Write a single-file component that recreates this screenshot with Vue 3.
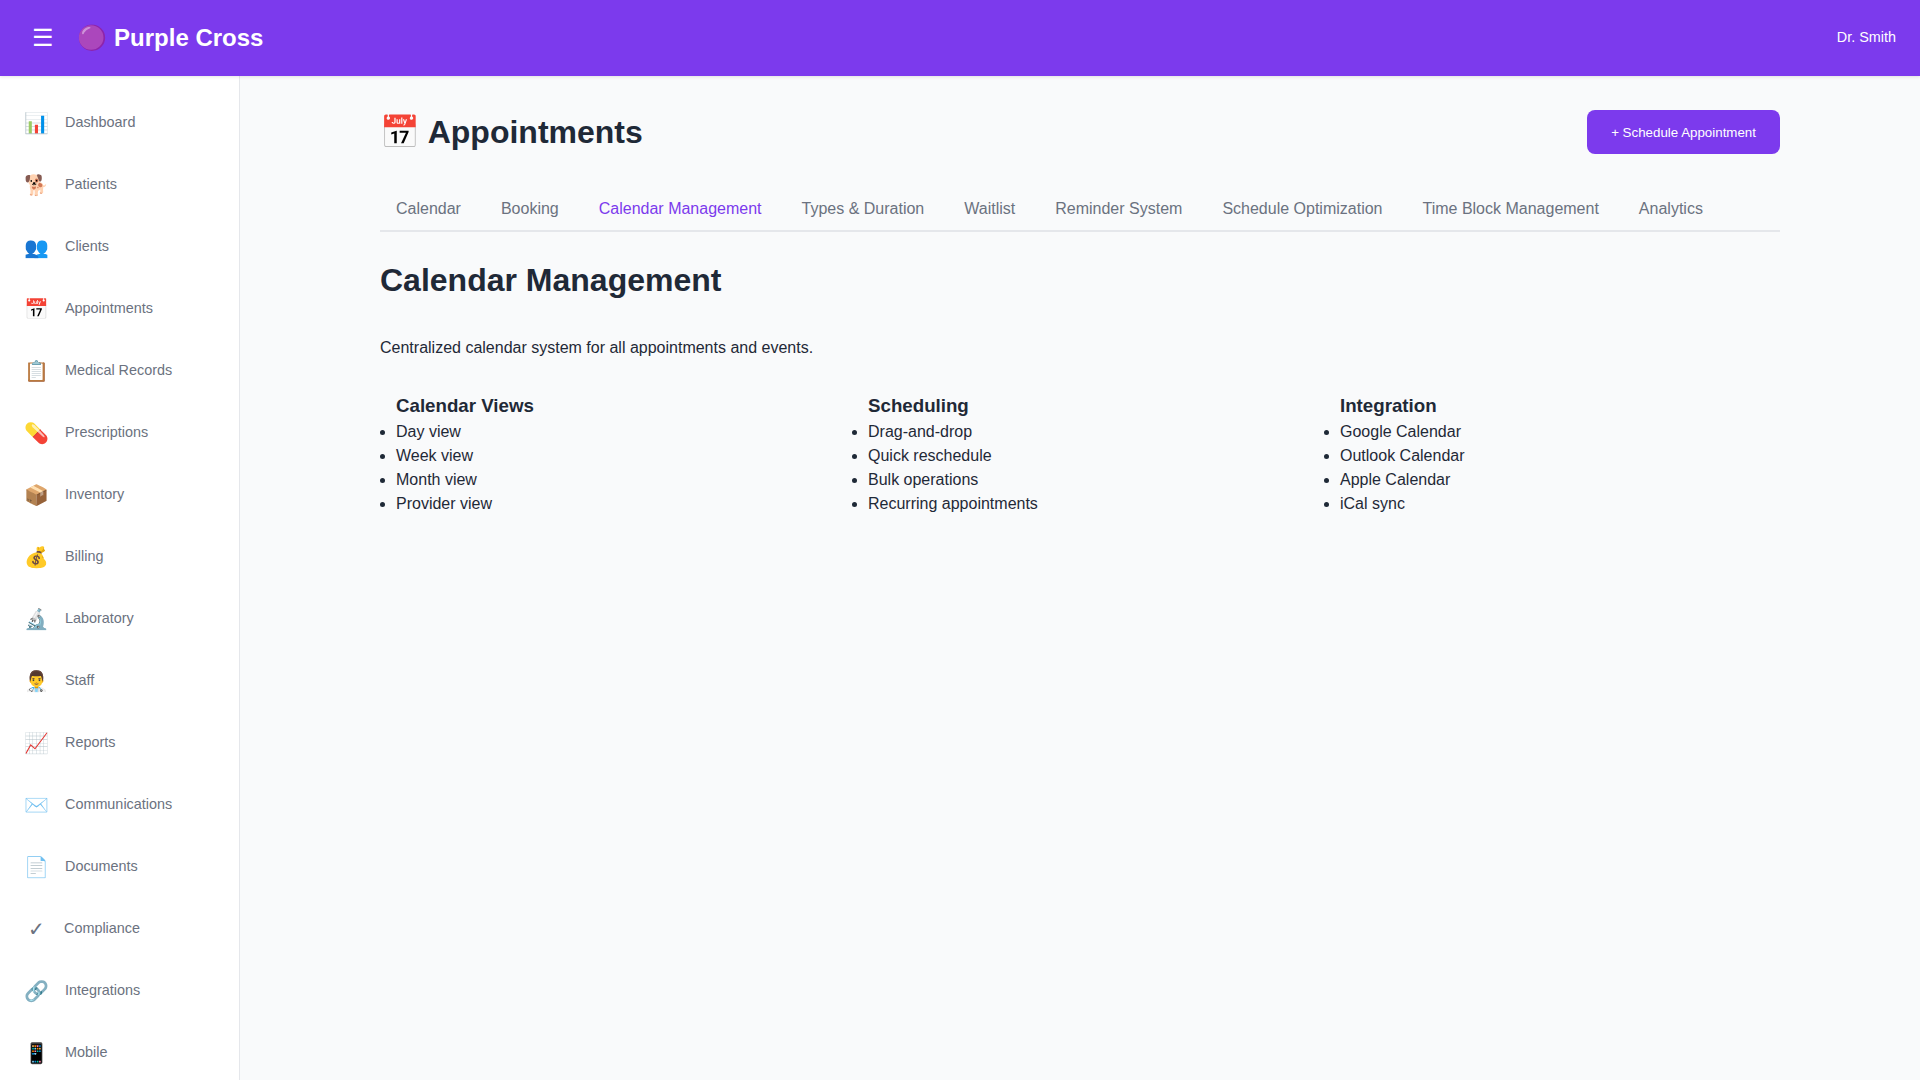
<script setup>
const nav = [
  ['📊', 'Dashboard'], ['🐕', 'Patients'], ['👥', 'Clients'], ['📅', 'Appointments'],
  ['📋', 'Medical Records'], ['💊', 'Prescriptions'], ['📦', 'Inventory'], ['💰', 'Billing'],
  ['🔬', 'Laboratory'], ['👨‍⚕️', 'Staff'], ['📈', 'Reports'], ['✉️', 'Communications'],
  ['📄', 'Documents'], ['✓', 'Compliance'], ['🔗', 'Integrations'], ['📱', 'Mobile'],
]
const tabs = ['Calendar', 'Booking', 'Calendar Management', 'Types & Duration', 'Waitlist',
  'Reminder System', 'Schedule Optimization', 'Time Block Management', 'Analytics']
const features = [
  { title: 'Calendar Views', items: ['Day view', 'Week view', 'Month view', 'Provider view'] },
  { title: 'Scheduling', items: ['Drag-and-drop', 'Quick reschedule', 'Bulk operations', 'Recurring appointments'] },
  { title: 'Integration', items: ['Google Calendar', 'Outlook Calendar', 'Apple Calendar', 'iCal sync'] },
]
</script>

<template>
  <div class="app">
    <header class="header">
      <div class="left">
        <button class="menu">☰</button>
        <h1 class="brand">🟣 Purple Cross</h1>
      </div>
      <span class="user">Dr. Smith</span>
    </header>
    <div class="body">
      <nav class="sidebar">
        <a v-for="[icon, label] in nav" :key="label" class="link">
          <span class="icon">{{ icon }}</span><span class="label">{{ label }}</span>
        </a>
      </nav>
      <main class="main">
        <div class="page">
          <div class="page-head">
            <h1>📅 Appointments</h1>
            <button class="primary">+ Schedule Appointment</button>
          </div>
          <div class="tabs">
            <button v-for="t in tabs" :key="t" class="tab" :class="{ active: t === 'Calendar Management' }">{{ t }}</button>
          </div>
          <h2>Calendar Management</h2>
          <p>Centralized calendar system for all appointments and events.</p>
          <div class="grid">
            <ul v-for="f in features" :key="f.title">
              <h3>{{ f.title }}</h3>
              <li v-for="i in f.items" :key="i">{{ i }}</li>
            </ul>
          </div>
        </div>
      </main>
    </div>
  </div>
</template>

<style>
body { margin: 0; overflow: hidden; }
</style>

<style scoped>
* { box-sizing: border-box; margin: 0; padding: 0; }
.app {
  height: 100vh; display: flex; flex-direction: column; overflow: hidden;
  font-family: "Liberation Sans", Arial, sans-serif; font-size: 16px; line-height: 1.5;
  color: #1f2937; background: #f9fafb;
}
.header {
  position: relative; z-index: 1; box-shadow: 0 1px 3px rgba(0, 0, 0, 0.1);
  flex: none; height: 76px; padding: 0 24px; display: flex; align-items: center;
  justify-content: space-between; background: #7c3aed; color: #fff;
}
.left { display: flex; align-items: center; gap: 15.4px; }
.menu { border: 0; background: none; color: #fff; font-size: 24px; padding: 8px; font-family: inherit; }
.brand { font-size: 24px; font-weight: 700; }
.user { font-size: 14.4px; }
.body { flex: 1; min-height: 0; display: flex; }
.sidebar {
  flex: none; width: 240px; padding: 16px 0; background: #fff;
  border-right: 1px solid #e5e7eb; overflow: hidden;
}
.link { display: flex; align-items: center; gap: 16px; height: 62px; padding: 0 24px; color: #6b7280; }
.icon { font-size: 20px; min-width: 24px; text-align: center; }
.label { font-size: 14.4px; }
.main { flex: 1; min-width: 0; padding: 32px; }
.page { width: 1400px; margin: 0 auto; }
.page-head { display: flex; justify-content: space-between; align-items: center; height: 48px; margin-bottom: 32px; }
.page-head h1 { font-size: 32px; }
.primary {
  border: 0; border-radius: 8px; background: #7c3aed; color: #fff; height: 44px;
  padding: 0 24px; font-family: inherit; font-size: 13.333px;
}
.tabs { display: flex; gap: 8px; border-bottom: 2px solid #e5e7eb; }
.tab { border: 0; background: none; padding: 12px 16px; font: inherit; line-height: 18px; color: #6b7280; }
.tab.active { color: #7c3aed; }
h2 { font-size: 32px; margin: 24px 0 32px; line-height: 48px; }
.grid { display: grid; grid-template-columns: repeat(3, 1fr); gap: 16px; margin-top: 32px; }
ul { padding-left: 16px; }
h3 { font-size: 18.72px; }
</style>
